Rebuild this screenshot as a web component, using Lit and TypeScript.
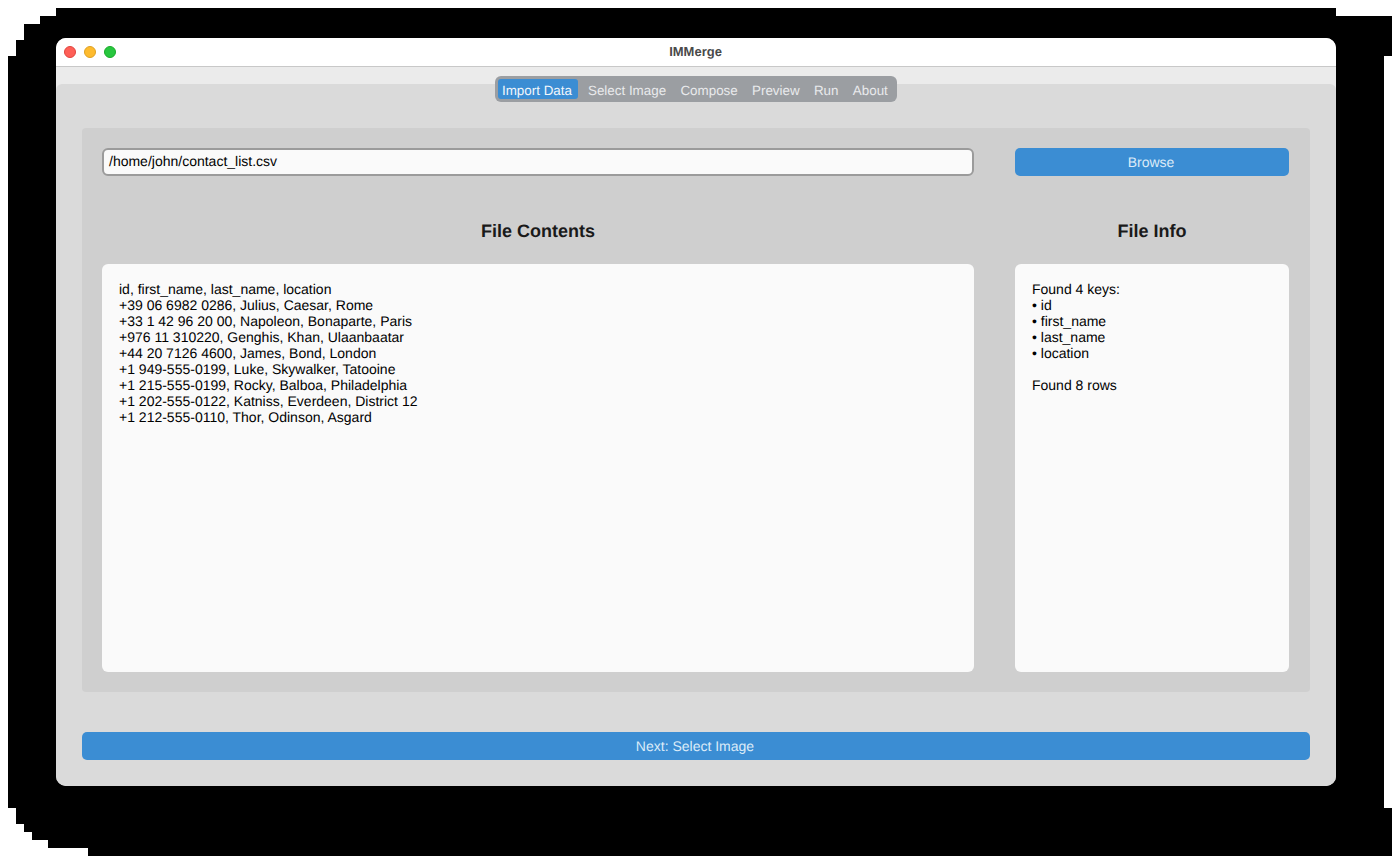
import { LitElement, html, css } from "lit";
import { customElement } from "lit/decorators.js";

const TABS = ["Import Data", "Select Image", "Compose", "Preview", "Run", "About"];
const CSV = `id, first_name, last_name, location
+39 06 6982 0286, Julius, Caesar, Rome
+33 1 42 96 20 00, Napoleon, Bonaparte, Paris
+976 11 310220, Genghis, Khan, Ulaanbaatar
+44 20 7126 4600, James, Bond, London
+1 949-555-0199, Luke, Skywalker, Tatooine
+1 215-555-0199, Rocky, Balboa, Philadelphia
+1 202-555-0122, Katniss, Everdeen, District 12
+1 212-555-0110, Thor, Odinson, Asgard`;
const INFO = `Found 4 keys:
• id
• first_name
• last_name
• location

Found 8 rows`;

@customElement("app-root")
export class AppRoot extends LitElement {
  static styles = css`
    :host {
      display: block;
      position: relative;
      width: 1392px;
      height: 860px;
      overflow: hidden;
      background: #fff;
      font-family: "Liberation Sans", Arial, sans-serif;
      color: #000;
      text-rendering: geometricPrecision;
    }
    .shadow {
      position: absolute;
      inset: 0;
      background: #000;
      clip-path: polygon(
        56px 8px, 1336px 8px, 1336px 16px, 1392px 16px, 1392px 56px, 1384px 56px,
        1384px 808px, 1392px 808px, 1392px 856px, 88px 856px, 88px 848px, 48px 848px,
        48px 840px, 32px 840px, 32px 832px, 24px 832px, 24px 824px, 16px 824px,
        16px 808px, 8px 808px, 8px 56px, 16px 56px, 16px 40px, 24px 40px, 24px 24px,
        40px 24px, 40px 16px, 56px 16px
      );
    }
    .window {
      position: relative;
      top: 38px;
      left: 56px;
      width: 1280px;
      height: 748px;
      border-radius: 10px;
      overflow: hidden;
      background: #ebebeb;
      display: flex;
      flex-direction: column;
    }
    .titlebar {
      flex: none;
      background: #fff;
      border-bottom: 1px solid #c8c8c8;
      position: relative;
      text-align: center;
      line-height: 27px;
      font-size: 13px;
      font-weight: 700;
      color: #4a4a4a;
      padding-right: 1px;
      box-sizing: border-box;
      height: 29px;
    }
    .lights {
      position: absolute;
      left: 8px;
      top: 8px;
      display: flex;
      gap: 8px;
    }
    .light {
      width: 12px;
      height: 12px;
      border-radius: 50%;
      box-sizing: border-box;
    }
    .red { background: #fe5f57; border: 0.5px solid #e0443e; }
    .yellow { background: #febb2e; border: 0.5px solid #dea123; }
    .green { background: #28c73f; border: 0.5px solid #1aab29; }
    .strip {
      height: 17px;
      flex: none;
    }
    .tabbar {
      position: absolute;
      left: 439px;
      top: 38px;
      width: 402px;
      height: 26px;
      box-sizing: border-box;
      padding: 3px;
      border-radius: 6px;
      background: #9b9ea2;
      display: flex;
      gap: 6.3px;
      font-size: 13.4px;
      color: #e9eaec;
    }
    .tab {
      height: 20px;
      line-height: 23px;
      padding: 0 4px;
      white-space: nowrap;
      border-radius: 3px;
    }
    .tab.active {
      background: #3b8dd3;
      color: #f2f7fc;
      padding-right: 5.7px;
    }
    .content {
      flex: 1;
      display: flex;
      flex-direction: column;
      padding: 44px 26px 26px;
      border-radius: 6px 6px 0 0;
      background: #dadada;
    }
    .panel {
      height: 564px;
      box-sizing: border-box;
      padding: 20px;
      background: #cfcfcf;
      border-radius: 4px;
      display: grid;
      grid-template-columns: 872px 274px;
      column-gap: 41px;
      grid-template-rows: 28px 88px 408px;
    }
    .input {
      box-sizing: border-box;
      height: 28px;
      border: 2px solid #9b9b9b;
      border-radius: 6px;
      background: #fafafa;
      padding: 0 5px;
      line-height: 23px;
      font-size: 14px;
    }
    .btn {
      height: 28px;
      background: #3b8dd3;
      border-radius: 5px;
      color: #dcebf8;
      font-size: 14px;
      text-align: center;
      line-height: 28px;
      padding-right: 2px;
      box-sizing: border-box;
    }
    .heading {
      font-size: 18px;
      font-weight: 700;
      color: #1a1a1a;
      text-align: center;
      padding-top: 45px;
      line-height: 21px;
    }
    .box {
      background: #fafafa;
      border-radius: 6px;
      padding: 17px;
      font-size: 14px;
      line-height: 16px;
      white-space: pre-line;
    }
    .next {
      margin-top: 40px;
    }
  `;

  render() {
    return html`
      <div class="shadow"></div>
      <div class="window">
        <div class="titlebar">
          <div class="lights">
            <div class="light red"></div>
            <div class="light yellow"></div>
            <div class="light green"></div>
          </div>
          IMMerge
        </div>
        <div class="strip"></div>
        <div class="tabbar">
          ${TABS.map(
            (t, i) => html`<div class="tab ${i === 0 ? "active" : ""}">${t}</div>`
          )}
        </div>
        <div class="content">
          <div class="panel">
            <div class="input">/home/john/contact_list.csv</div>
            <div class="btn">Browse</div>
            <div class="heading">File Contents</div>
            <div class="heading">File Info</div>
            <div class="box">${CSV}</div>
            <div class="box">${INFO}</div>
          </div>
          <div class="btn next">Next: Select Image</div>
        </div>
      </div>
    `;
  }
}
